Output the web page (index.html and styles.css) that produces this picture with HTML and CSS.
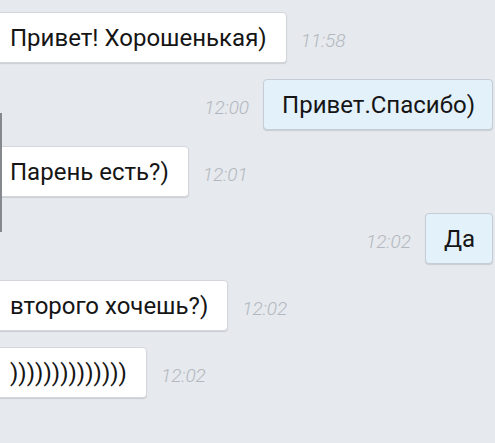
FILE: index.html
```html
<!DOCTYPE html>
<html lang="ru">
<head>
<meta charset="utf-8">
<link rel="stylesheet" href="styles.css">
</head>
<body>
<div class="chat">
  <div class="row in">
    <div class="bubble">Привет! Хорошенькая)</div>
    <span class="time">11:58</span>
  </div>
  <div class="row out">
    <span class="time">12:00</span>
    <div class="bubble">Привет.Спасибо)</div>
  </div>
  <div class="row in">
    <div class="bubble">Парень есть?)</div>
    <span class="time">12:01</span>
  </div>
  <div class="row out">
    <span class="time">12:02</span>
    <div class="bubble">Да</div>
  </div>
  <div class="row in">
    <div class="bubble">второго хочешь?)</div>
    <span class="time">12:02</span>
  </div>
  <div class="row in">
    <div class="bubble">))))))))))))))</div>
    <span class="time">12:02</span>
  </div>
  <div class="edge"></div>
</div>
</body>
</html>
```
FILE: styles.css
```css
html, body {
  margin: 0;
  padding: 0;
  background: #e6e9ed;
}
body {
  width: 495px;
  height: 443px;
  overflow: hidden;
  font-family: Roboto, "Noto Sans", sans-serif;
}
.chat {
  position: relative;
  display: flex;
  flex-direction: column;
  gap: 16px;
  padding-top: 12px;
}
.row {
  display: flex;
  align-items: center;
  gap: 14px;
}
.row.out {
  justify-content: flex-end;
  padding-right: 2px;
}
.bubble {
  box-sizing: border-box;
  height: 51px;
  display: flex;
  align-items: center;
  font-size: 24px;
  color: #151515;
  background: #ffffff;
  border: 1px solid #d3d7dc;
  border-radius: 4px;
  box-shadow: 0 1px 1px rgba(0, 0, 0, 0.12);
  padding: 0 19px 0 17px;
}
.row.in .bubble {
  margin-left: -8px;
}
.row.out .bubble {
  background: #e3f1fb;
  border-color: #c5cdd6;
  padding: 0 17px 0 18px;
}
.time {
  font-size: 19px;
  font-style: italic;
  font-weight: 300;
  color: #b3b8c0;
  padding-top: 5px;
}
.edge {
  position: absolute;
  left: 0;
  top: 113px;
  width: 2px;
  height: 119px;
  background: #85888c;
}
```
